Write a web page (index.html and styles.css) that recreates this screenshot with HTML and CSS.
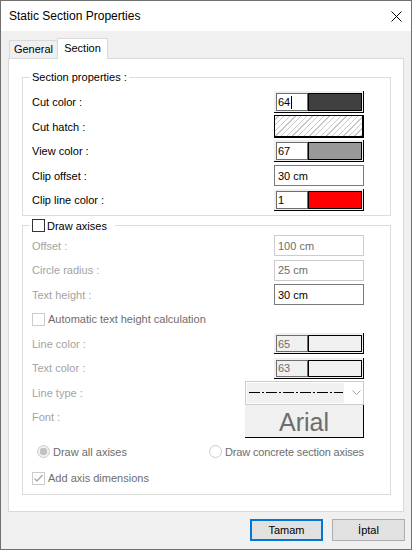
FILE: index.html
```html
<!DOCTYPE html>
<html lang="en">
<head>
  <meta charset="UTF-8">
  <title>Static Section Properties</title>
  <link rel="stylesheet" href="styles.css">
</head>
<body>
  <div class="window">
    <!-- Barre de titre -->
    <div class="titlebar">
      <span class="title">Static Section Properties</span>
      <svg class="close" width="11" height="11" viewBox="0 0 11 11"><path d="M0.5 0.5L10.5 10.5M10.5 0.5L0.5 10.5" stroke="#000" stroke-width="1"/></svg>
    </div>

    <!-- Onglets -->
    <div class="tabs">
      <div class="tab">General</div>
      <div class="tab active">Section</div>
    </div>

    <div class="panel">
      <fieldset class="group group-section">
        <legend>Section properties :</legend>
        <div class="row">
          <span>Cut color :</span>
          <div class="color-pick"><span class="color-num">64<i class="caret"></i></span><span class="swatch swatch-dark"></span></div>
        </div>
        <div class="row">
          <span>Cut hatch :</span>
          <div class="hatch"></div>
        </div>
        <div class="row">
          <span>View color :</span>
          <div class="color-pick"><span class="color-num">67</span><span class="swatch swatch-grey"></span></div>
        </div>
        <div class="row">
          <span>Clip offset :</span>
          <div class="field">30 cm</div>
        </div>
        <div class="row">
          <span>Clip line color :</span>
          <div class="color-pick"><span class="color-num">1</span><span class="swatch swatch-red"></span></div>
        </div>
      </fieldset>

      <fieldset class="group group-axes">
        <legend><span class="check"></span>Draw axises</legend>
        <div class="row">
          <span class="muted">Offset :</span>
          <div class="field disabled">100 cm</div>
        </div>
        <div class="row">
          <span class="muted">Circle radius :</span>
          <div class="field disabled">25 cm</div>
        </div>
        <div class="row">
          <span class="muted">Text height :</span>
          <div class="field">30 cm</div>
        </div>
        <div class="row">
          <label class="option"><span class="check disabled"></span>Automatic text height calculation</label>
        </div>
        <div class="row">
          <span class="muted">Line color :</span>
          <div class="color-pick disabled"><span class="color-num">65</span><span class="swatch"></span></div>
        </div>
        <div class="row">
          <span class="muted">Text color :</span>
          <div class="color-pick disabled"><span class="color-num">63</span><span class="swatch"></span></div>
        </div>
        <div class="row">
          <span class="muted">Line type :</span>
          <div class="combo">
            <div class="combo-value">
              <svg width="94" height="3" viewBox="0 0 94 3"><line x1="0" y1="1.5" x2="94" y2="1.5" stroke="#000" stroke-width="1" stroke-dasharray="11 2 2 2"/></svg>
            </div>
            <svg class="chevron" width="9" height="5" viewBox="0 0 9 5"><path d="M0.5 0.5L4.5 4.5L8.5 0.5" fill="none" stroke="#a0a0a0" stroke-width="1"/></svg>
          </div>
        </div>
        <div class="row row-font">
          <span class="muted">Font :</span>
          <div class="font-btn">Arial</div>
        </div>
        <div class="row radio-row">
          <label class="option option-first"><span class="radio selected"></span>Draw all axises</label>
          <label class="option option-tight"><span class="radio"></span>Draw concrete section axises</label>
        </div>
        <div class="row row-last">
          <label class="option"><span class="check disabled checked">
            <svg width="11" height="11" viewBox="0 0 11 11"><path d="M1.5 5.5L4 8L9.5 2" fill="none" stroke="#a8a8a8" stroke-width="1.3"/></svg>
          </span>Add axis dimensions</label>
        </div>
      </fieldset>
    </div>

    <div class="buttons">
      <button class="btn btn-default">Tamam</button>
      <button class="btn">İptal</button>
    </div>
  </div>
</body>
</html>
```

FILE: styles.css
```css
body {
  margin: 0;
  background: #f0f0f0;
}
.window {
  width: 412px;
  height: 550px;
  box-sizing: border-box;
  border: 1px solid #707070;
  background: #f0f0f0;
  font-family: "Liberation Sans", Arial, sans-serif;
  font-size: 11px;
  color: #000;
}

/* Barre de titre */
.titlebar {
  height: 30px;
  background: #fff;
  display: flex;
  align-items: center;
  justify-content: space-between;
  padding: 0 9px 0 8px;
}
.title {
  font-size: 12px;
}
.close {
  display: block;
}

/* Onglets */
.tabs {
  display: flex;
  align-items: flex-end;
  margin: 7px 0 -1px 8px;
}
.tab {
  box-sizing: border-box;
  height: 18px;
  width: 48px;
  margin-bottom: 1px;
  border: 1px solid #d9d9d9;
  border-right: none;
  border-bottom: none;
  background: #f0f0f0;
  text-align: center;
  line-height: 17px;
}
.tab.active {
  height: 21px;
  width: 51px;
  margin-bottom: 0;
  border-right: 1px solid #d9d9d9;
  background: #fff;
  line-height: 18px;
}

.panel {
  height: 454px;
  box-sizing: border-box;
  margin: 0 7px;
  border: 1px solid #d9d9d9;
  background: #fff;
}

/* Cadres de groupe */
.group {
  margin: 11px 12px 0 13px;
  padding: 6px 26px 2px 9px;
  border: 1px solid #dcdcdc;
  min-width: 0;
}
.group legend {
  padding: 0 2px;
  margin-left: -2px;
  line-height: 14px;
}
.group-axes {
  margin-top: 3px;
  padding: 1px 26px 3px 9px;
}
.group-axes legend {
  display: flex;
  align-items: center;
  padding: 0 8px 0 2px;
}
.group-axes legend .check {
  margin-right: 2px;
  border-color: #333;
}

.row {
  display: flex;
  align-items: center;
  justify-content: space-between;
  height: 24.5px;
}
.row-font {
  height: 33px;
  align-items: flex-start;
}
.row-font .muted {
  line-height: 24px;
}
.row-last {
  margin-top: 2px;
}
.muted {
  color: #a3a3a3;
}

/* Champs texte */
.field {
  width: 90px;
  height: 21px;
  box-sizing: border-box;
  border: 1px solid #7a7a7a;
  background: #fff;
  padding-left: 3px;
  display: flex;
  align-items: center;
}
.field.disabled {
  border-color: #cccccc;
  color: #6d6d6d;
}

/* Selecteur de couleur */
.color-pick {
  width: 90px;
  height: 22px;
  box-sizing: border-box;
  display: flex;
  padding: 2px 1px 1px 2px;
  background: #f0f0f0;
  border-right: 1px solid #000;
  border-bottom: 1px solid #000;
}
.color-pick.disabled {
  height: 21px;
}
.color-num {
  width: 32px;
  box-sizing: border-box;
  border: 1px solid #6d6d6d;
  background: #fff;
  padding-left: 1px;
  display: flex;
  align-items: center;
}
.color-pick.disabled .color-num {
  background: #f0f0f0;
  color: #6d6d6d;
}
.caret {
  display: inline-block;
  width: 1px;
  height: 13px;
  background: #000;
  margin-left: 1px;
}
.swatch {
  flex: 1;
  border: 1px solid #000;
  background: #f0f0f0;
}
.swatch-dark { background: #404040; }
.swatch-grey { background: #999999; }
.swatch-red { background: #ff0000; }

.hatch {
  width: 90px;
  height: 23px;
  box-sizing: border-box;
  border: 1px solid #000;
  border-right-width: 2px;
  border-bottom-width: 2px;
  background: repeating-linear-gradient(135deg, #fff 0 2px, #c8c8c8 2px 3px, #fff 3px 4px);
}

/* Liste deroulante */
.combo {
  width: 119px;
  height: 24px;
  box-sizing: border-box;
  border: 1px solid #cccccc;
  display: flex;
  align-items: center;
  padding: 1px;
}
.combo-value {
  width: 97px;
  height: 100%;
  background: #f0f0f0;
  display: flex;
  align-items: center;
  padding-left: 2px;
  box-sizing: border-box;
}
.combo-value svg {
  display: block;
}
.chevron {
  margin-left: 8px;
  display: block;
}

.font-btn {
  width: 119px;
  height: 33px;
  box-sizing: border-box;
  background: #f0f0f0;
  border-right: 1px solid #000;
  border-bottom: 1px solid #000;
  color: #6d6d6d;
  font-size: 25px;
  text-align: center;
  line-height: 34px;
}

/* Cases a cocher et boutons radio */
.option {
  display: flex;
  align-items: center;
  color: #6d6d6d;
  white-space: nowrap;
}
.option-tight {
  letter-spacing: -0.15px;
}
.check {
  width: 13px;
  height: 13px;
  box-sizing: border-box;
  border: 1px solid #333;
  background: #fff;
  margin-right: 3px;
  display: inline-flex;
  align-items: center;
  justify-content: center;
}
.check.disabled {
  border-color: #cccccc;
}
.check svg {
  display: block;
}
.radio-row {
  justify-content: flex-start;
  margin-top: 1.5px;
  padding-left: 5px;
}
.option-first {
  width: 172px;
  flex-shrink: 0;
}
.radio {
  width: 13px;
  height: 13px;
  box-sizing: border-box;
  border: 1px solid #cccccc;
  border-radius: 50%;
  background: #fff;
  margin-right: 3px;
}
.radio.selected {
  background: radial-gradient(circle, #c2c2c2 0 3.5px, #f0f0f0 4px);
}

/* Boutons */
.buttons {
  display: flex;
  justify-content: flex-end;
  gap: 9px;
  padding-right: 6px;
  margin-top: 7px;
}
.btn {
  width: 73px;
  height: 22px;
  box-sizing: border-box;
  border: 1px solid #adadad;
  background: #e1e1e1;
  font-family: "Liberation Sans", Arial, sans-serif;
  font-size: 11px;
  color: #000;
  padding: 0;
}
.btn-default {
  border: 2px solid #0078d7;
}
```
